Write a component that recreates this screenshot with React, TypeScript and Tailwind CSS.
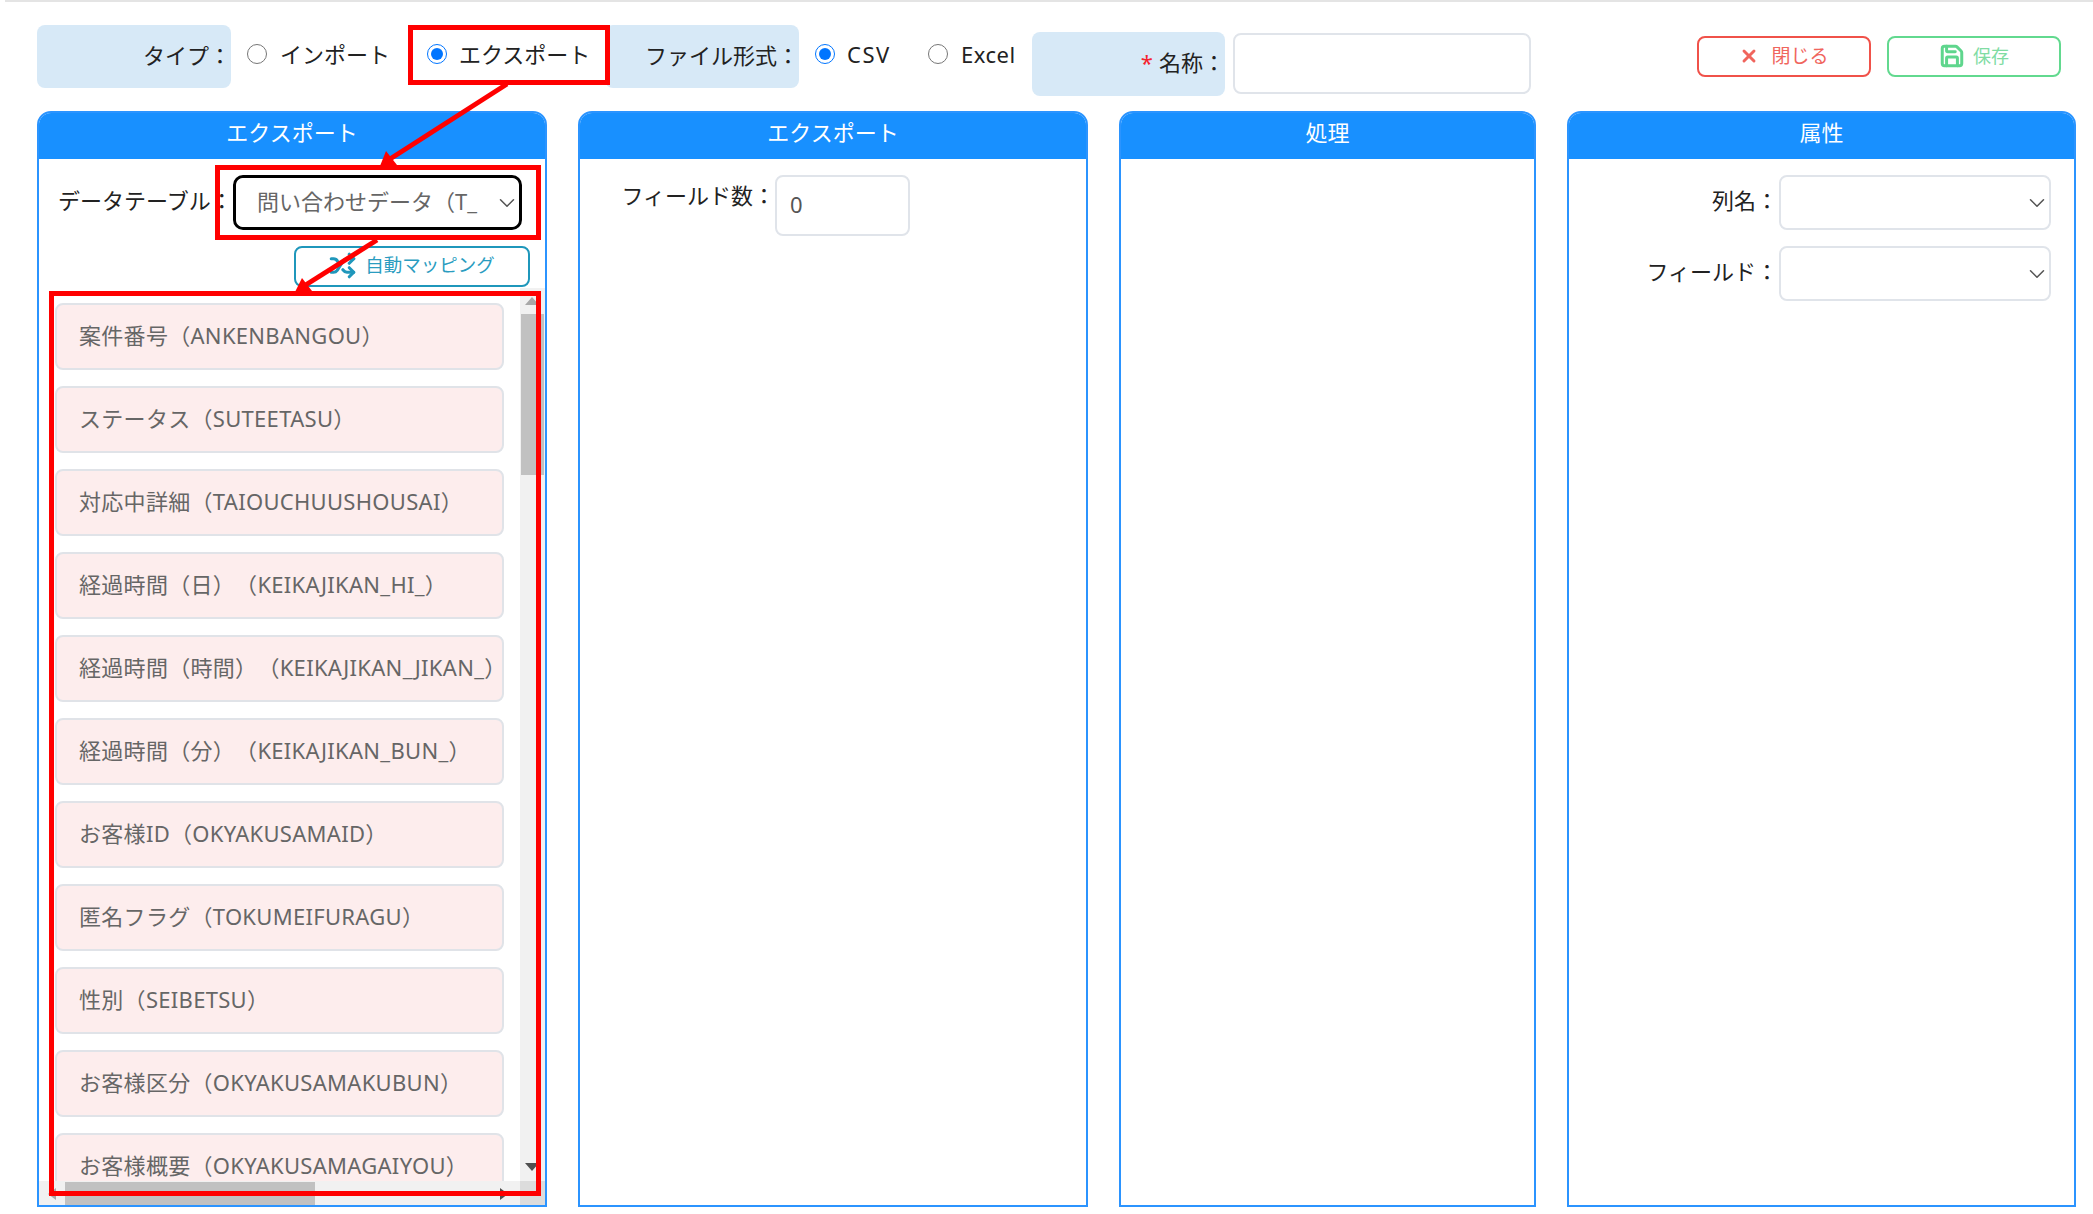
import React from "react";
import { ChevronDown, Save, Shuffle, X } from "lucide-react";

const items = [
  "案件番号（ANKENBANGOU）",
  "ステータス（SUTEETASU）",
  "対応中詳細（TAIOUCHUUSHOUSAI）",
  "経過時間（日）（KEIKAJIKAN_HI_）",
  "経過時間（時間）（KEIKAJIKAN_JIKAN_）",
  "経過時間（分）（KEIKAJIKAN_BUN_）",
  "お客様ID（OKYAKUSAMAID）",
  "匿名フラグ（TOKUMEIFURAGU）",
  "性別（SEIBETSU）",
  "お客様区分（OKYAKUSAMAKUBUN）",
  "お客様概要（OKYAKUSAMAGAIYOU）",
];

function Panel({ title, className, children }: { title: string; className: string; children?: React.ReactNode }) {
  return (
    <section className={`h-full flex flex-col border-2 border-[#2b94ff] rounded-t-[14px] overflow-hidden ${className}`}>
      <h2 className="h-[48px] shrink-0 -mt-[2px] pt-[2px] pb-[9px] box-border bg-[#1890ff] text-white text-[22px] font-normal flex items-center justify-center">
        {title}
      </h2>
      {children}
    </section>
  );
}

function FormSelect({ className, text }: { className: string; text?: string }) {
  return (
    <div className={`relative ${className}`}>
      <select className="w-full h-full appearance-none bg-white outline-none text-[#666] text-[22px] pl-[21px] pb-[3px] rounded-lg">
        <option>{text ?? ""}</option>
      </select>
      <ChevronDown className="absolute right-[-1px] top-1/2 -translate-y-1/2 text-[#555] pointer-events-none" size={26} strokeWidth={1.4} />
    </div>
  );
}

export default function App() {
  return (
    <div
      className="relative w-[2093px] h-[1214px] overflow-hidden bg-white text-[#222] text-[22px] leading-[30px] [text-spacing-trim:space-all]"
      style={{ fontFamily: '"Noto Sans", "Noto Sans CJK JP", sans-serif' }}
    >
      <div className="h-[2px] ml-[5px] bg-[#e4e4e4]" />

      <header className="flex items-start pt-[23px] pl-[37px] pr-[32px]">
        <div className="w-[194px] h-[63px] bg-[#d7e9f7] rounded-lg flex items-center justify-end pb-[3px]">タイプ：</div>
        <label className="flex items-center h-[58px] w-[140px] ml-[16px] whitespace-nowrap">
          <input type="radio" name="kind" className="w-5 h-5 m-0 shrink-0" />
          <span className="ml-[13px]">インポート</span>
        </label>
        <label className="flex items-center h-[58px] w-[161px] ml-[40px] whitespace-nowrap">
          <input type="radio" name="kind" defaultChecked className="w-5 h-5 m-0 shrink-0" />
          <span className="ml-[12px]">エクスポート</span>
        </label>
        <div className="w-[194px] h-[63px] ml-[17px] bg-[#d7e9f7] rounded-lg flex items-center justify-end pb-[3px]">ファイル形式：</div>
        <label className="flex items-center h-[58px] w-[75px] ml-[16px] whitespace-nowrap">
          <input type="radio" name="format" defaultChecked className="w-5 h-5 m-0 shrink-0" />
          <span className="ml-[12px] tracking-[1.5px]">CSV</span>
        </label>
        <label className="flex items-center h-[58px] w-[88px] ml-[38px] whitespace-nowrap">
          <input type="radio" name="format" className="w-5 h-5 m-0 shrink-0" />
          <span className="ml-[13px] tracking-[0.5px]">Excel</span>
        </label>
        <div className="w-[193px] h-[64px] ml-[16px] mt-[7px] bg-[#d7e9f7] rounded-lg flex items-center justify-end pb-[4px]">
          <span className="text-[#f5222d] mr-[6px]">*</span>名称：
        </div>
        <input className="w-[298px] h-[61px] ml-[8px] mt-[8px] border-2 border-[#e0e4ea] rounded-lg bg-white" />
        <div className="ml-auto mt-[11px] flex gap-[16px]">
          <button className="w-[174px] h-[41px] pb-[2px] border-2 border-[#f0524a] rounded-lg flex items-center justify-center gap-[12px] text-[#f0655d] text-[19px]">
            <X size={20} strokeWidth={3.5} />
            閉じる
          </button>
          <button className="w-[174px] h-[41px] pb-[2px] border-2 border-[#62d98f] rounded-lg flex items-center justify-center gap-[8px] text-[#80dca3] text-[18px]">
            <Save size={26} strokeWidth={2.75} className="text-[#5fd68d]" />
            保存
          </button>
        </div>
      </header>

      <main className="flex h-[1096px] mt-[15px] ml-[37px] gap-[31px]">
        <Panel title="エクスポート" className="w-[510px]">
          <div className="flex items-center mt-[16px] h-[55px]">
            <span className="w-[192px] pl-[19px] pb-[5px] whitespace-nowrap shrink-0">データテーブル：</span>
            <FormSelect
              text="問い合わせデータ（T_"
              className="ml-[2px] w-[289px] h-[55px] border-[3px] border-black rounded-[10px] overflow-hidden"
            />
          </div>
          <div className="flex justify-end mt-[16px] pr-[15px]">
            <button className="w-[236px] h-[41px] pb-[3px] border-2 border-[#1f97bb] rounded-lg flex items-center justify-center gap-[9px] text-[#2a9cc0] text-[18.5px]">
              <Shuffle size={27} strokeWidth={2.75} className="text-[#1f97bb]" />
              自動マッピング
            </button>
          </div>
          <div className="relative mt-[1px] h-[917px] overflow-hidden">
            <div className="flex flex-col gap-[16px] pt-[15px] pl-[16px]">
              {items.map((t) => (
                <div
                  key={t}
                  className="w-[449px] h-[67px] shrink-0 bg-[#fdeded] border-2 border-[#e0e3e8] rounded-lg flex items-center pl-[22px] pb-[3px] text-[#666] tracking-[0.3px] whitespace-nowrap"
                >
                  {t}
                </div>
              ))}
            </div>
            {/* scrollbars */}
            <div className="absolute right-0 top-0 bottom-0 w-[25px] bg-[#f1f1f1]">
              <div className="absolute left-[1px] top-[26px] w-[23px] h-[161px] bg-[#c1c1c1]" />
              <svg className="absolute left-[4px] top-[8px]" width="16" height="10" viewBox="0 0 16 10"><path d="M8 1 L15 9 L1 9 Z" fill="#a8a8a8" /></svg>
              <svg className="absolute left-[4px] top-[874px]" width="16" height="10" viewBox="0 0 16 10"><path d="M1 1 L15 1 L8 9 Z" fill="#505050" /></svg>
            </div>
            <div className="absolute left-0 right-0 bottom-0 h-[24px] bg-[#f1f1f1]">
              <div className="absolute left-[26px] top-[1px] w-[250px] h-[23px] bg-[#c1c1c1]" />
              <svg className="absolute left-[8px] top-[6px]" width="10" height="14" viewBox="0 0 10 14"><path d="M9 1 L9 13 L1 7 Z" fill="#a8a8a8" /></svg>
              <svg className="absolute left-[460px] top-[6px]" width="10" height="14" viewBox="0 0 10 14"><path d="M1 1 L9 7 L1 13 Z" fill="#505050" /></svg>
              <div className="absolute right-0 top-0 bottom-0 w-[25px] bg-[#dcdcdc]" />
            </div>
          </div>
        </Panel>

        <Panel title="エクスポート" className="w-[510px]">
          <div className="flex items-start mt-[16px]">
            <span className="w-[194px] ml-[1px] text-right mt-[5px]">フィールド数：</span>
            <input
              defaultValue="0"
              className="w-[135px] h-[61px] border-2 border-[#e0e4ea] rounded-lg pl-[13px] pb-[3px] text-[#555] text-[22px] bg-white"
            />
          </div>
        </Panel>

        <Panel title="処理" className="w-[417px]" />

        <Panel title="属性" className="w-[509px]">
          <div className="flex flex-col gap-[16px] mt-[16px] pr-[23px]">
            <div className="flex items-center justify-end">
              <span className="mr-[1px] pb-[5px]">列名：</span>
              <FormSelect className="w-[272px] h-[55px] border-2 border-[#e0e4ea] rounded-lg" />
            </div>
            <div className="flex items-center justify-end">
              <span className="mr-[1px] pb-[5px]">フィールド：</span>
              <FormSelect className="w-[272px] h-[55px] border-2 border-[#e0e4ea] rounded-lg" />
            </div>
          </div>
        </Panel>
      </main>

      {/* red annotations */}
      <div className="absolute left-[408px] top-[25px] w-[202px] h-[60px] border-[5px] border-[#ff0000]" />
      <div className="absolute left-[215px] top-[165px] w-[326px] h-[75px] border-[5px] border-[#ff0000]" />
      <div className="absolute left-[49px] top-[291px] w-[492px] h-[905px] border-[5px] border-[#ff0000]" />
      <svg className="absolute left-0 top-0 pointer-events-none" width="2093" height="1214" viewBox="0 0 2093 1214">
        <path d="M507 84 L390 159" stroke="#ff0000" strokeWidth="5" fill="none" />
        <path d="M380 166 L386 151 L397 165 Z" fill="#ff0000" />
        <path d="M377 240 L304 286" stroke="#ff0000" strokeWidth="5" fill="none" />
        <path d="M295 292 L302 278 L312 291 Z" fill="#ff0000" />
      </svg>
    </div>
  );
}
